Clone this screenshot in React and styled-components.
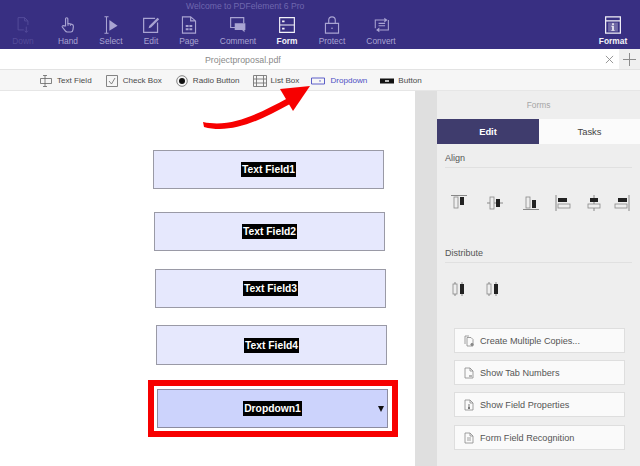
import React from 'react'
import styled, { createGlobalStyle } from 'styled-components'

const Global = createGlobalStyle`
  html, body { margin: 0; padding: 0; background: #fff; }
  body { font-family: "Liberation Sans", Arial, sans-serif; }
`

const Page = styled.div`
  position: relative;
  width: 640px;
  height: 466px;
  overflow: hidden;
`

const Header = styled.header`
  height: 49px;
  background: #382f82;
  display: flex;
  flex-direction: column;
`
const Title = styled.div`
  height: 12px;
  padding-left: 186px;
  padding-top: 1px;
  font-size: 8.6px;
  line-height: 11px;
  color: #6f67ae;
`
const Tools = styled.div`
  display: flex;
  flex: 1;
`
const Tool = styled.div`
  width: ${p => p.$w}px;
  margin-left: ${p => p.$push ? 'auto' : '0'};
  display: flex;
  flex-direction: column;
  align-items: center;
  color: ${p => p.$off ? '#544b9a' : p.$on ? '#f2f1f8' : '#a9a4d2'};
  font-size: 8.4px;
  font-weight: ${p => p.$on ? 700 : 400};
  svg { display: block; height: 18px; width: 18px; margin-top: 3px; }
  span { line-height: 10px; margin-top: 2px; }
`

const TabRow = styled.div`
  box-sizing: border-box;
  height: 21px;
  display: flex;
  background: #fff;
  border-bottom: 1px solid #e3e3e3;
`
const FileName = styled.div`
  flex: 1;
  padding-left: 205px;
  font-size: 8.8px;
  line-height: 22px;
  color: #8a8a8a;
`
const CloseBtn = styled.div`
  width: 20px;
  display: flex;
  align-items: center;
  justify-content: center;
  color: #8c8c8c;
  svg { width: 9px; height: 9px; }
`
const AddBtn = styled.div`
  width: 21px;
  background: #f0f0f0;
  display: flex;
  align-items: center;
  justify-content: center;
  color: #8c8c8c;
  svg { width: 13px; height: 13px; }
`

const FormBar = styled.div`
  box-sizing: border-box;
  height: 21px;
  background: #f6f6f6;
  border-bottom: 1px solid #e6e6e6;
  display: flex;
  align-items: center;
  padding: 1px 0 0 40px;
`
const FormItem = styled.div`
  display: flex;
  align-items: center;
  margin-right: ${p => p.$gap}px;
  font-size: 8.1px;
  color: ${p => p.$active ? '#4c4fc4' : '#4a4a4a'};
  svg { display: block; width: ${p => p.$icon || 12}px; height: 12px; margin-right: ${p => p.$iconGap || 5}px; }
`

const Main = styled.div`
  display: flex;
  height: 375px;
`
const Canvas = styled.div`
  width: 415px;
  background: #fff;
  padding-top: 59px;
  box-sizing: border-box;
`
const Gutter = styled.div`
  width: 22px;
  background: #dfdfdf;
`
const Field = styled.div`
  box-sizing: border-box;
  width: 231px;
  height: ${p => p.$h || 39}px;
  margin-left: ${p => p.$left}px;
  margin-top: ${p => p.$top}px;
  background: #e6e8fd;
  border: 1px solid #9a9aa6;
  display: flex;
  align-items: center;
  justify-content: center;
`
const Label = styled.span`
  background: #000;
  color: #fff;
  font-size: 10.3px;
  font-weight: 700;
  line-height: 15px;
  padding: 0 1px;
`
const RedFrame = styled.div`
  box-sizing: border-box;
  width: 250px;
  height: 57px;
  margin-left: 148px;
  margin-top: 15px;
  border: 6px solid #f70000;
  background: #fff;
  padding: 3px;
`
const DropField = styled.div`
  position: relative;
  box-sizing: border-box;
  height: 39px;
  width: 231px;
  background: #ccd3fc;
  border: 1px solid #8c8ca0;
  display: flex;
  align-items: center;
  justify-content: center;
`
const Caret = styled.i`
  position: absolute;
  right: 3px;
  top: 16px;
  width: 0;
  height: 0;
  border-left: 3.5px solid transparent;
  border-right: 3.5px solid transparent;
  border-top: 6px solid #111;
`

const Panel = styled.aside`
  width: 203px;
  background: #eeeeee;
  display: flex;
  flex-direction: column;
`
const PanelTitle = styled.div`
  height: 28px;
  text-align: center;
  font-size: 8.4px;
  line-height: 28px;
  color: #a6a6a6;
`
const Tabs = styled.div`
  display: flex;
  height: 25px;
`
const Tab = styled.div`
  width: ${p => p.$w}px;
  text-align: center;
  font-size: 9.4px;
  line-height: 25px;
  background: ${p => p.$on ? '#3f3c6d' : '#fbfbfb'};
  color: ${p => p.$on ? '#fff' : '#444'};
  font-weight: ${p => p.$on ? 700 : 400};
`
const Section = styled.div`
  margin: ${p => p.$top}px 8px 0 8px;
  padding-bottom: 3px;
  font-size: 9px;
  line-height: 12px;
  color: #555;
  border-bottom: 1px solid #e0e0e0;
`
const IconRow = styled.div`
  display: grid;
  grid-template-columns: ${p => p.$cols};
  margin-top: ${p => p.$top}px;
  padding-left: 13px;
  svg { display: block; width: 18px; height: 18px; }
`
const ActionList = styled.div`
  display: flex;
  flex-direction: column;
  margin: 30px 15px 0 17px;
  gap: 7px;
`
const Action = styled.div`
  height: 25px;
  box-sizing: border-box;
  background: #fafafa;
  border: 1px solid #dedede;
  display: flex;
  align-items: center;
  padding: 1px 0 0 8px;
  font-size: 9.15px;
  color: #555;
  svg { display: block; width: 12px; height: 12px; margin-right: 5px; color: #888; }
  &:last-child { margin-top: 1px; }
`
const ArrowLayer = styled.svg`
  position: absolute;
  left: 0;
  top: 0;
  width: 640px;
  height: 466px;
  pointer-events: none;
`

const line = { fill: 'none', stroke: 'currentColor', strokeWidth: 1.2 }

const DownIcon = () => (
  <svg viewBox="0 0 22 22" {...line}>
    <path d="M12 17H5V2h8l4 4v5M13 2v4h4" />
    <path d="M15 13v7M13 18l2 2 2-2" />
  </svg>
)
const HandIcon = () => (
  <svg viewBox="0 0 22 22" {...line} strokeWidth="1.4">
    <path d="M8 12V3.5a1.4 1.4 0 0 1 2.800 0V9l5 1.200c1.400.4 2 1.300 1.800 2.800l-.6 4c-.2 1.500-1 2.500-2.500 2.500H10c-1 0-1.700-.4-2.300-1.300L4 13.500c-.6-1 .8-2.300 1.800-1.500z" />
    <path d="M11 9v3M14 10v2" />
  </svg>
)
const SelectIcon = () => (
  <svg viewBox="0 0 22 22" {...line} strokeWidth="1.3">
    <path d="M3 1h5M3 21h5M5.500 1v20" />
    <path d="M9 5l10 7-10 6z" fill="currentColor" stroke="none" />
  </svg>
)
const EditIcon = () => (
  <svg viewBox="0 0 22 22" {...line} strokeWidth="1.500">
    <path d="M19 8v12H2V3h14" />
    <path d="M8 15l1-3L19 2l2 2-10 10z" fill="currentColor" stroke="none" />
  </svg>
)
const PageIcon = () => (
  <svg viewBox="0 0 22 22" {...line} strokeWidth="1.400">
    <path d="M3 1h10l6 5v15H3zM13 1v5h6" />
    <path d="M7 11h3.500v2.500H7zM11.500 11H15v2.500h-3.500zM7 15h3.500v2.500H7zM11.500 15H15v2.500h-3.500z" fill="currentColor" stroke="none" />
  </svg>
)
const CommentIcon = () => (
  <svg viewBox="0 0 22 22" {...line} strokeWidth="1.400">
    <path d="M9 14H2V2h16v7" />
    <path d="M7 9h13v8h-1v3l-3-3H7z" fill="currentColor" stroke="none" />
  </svg>
)
const FormIcon = () => (
  <svg viewBox="0 0 22 22" {...line} strokeWidth="1.400">
    <path d="M2 2h18v18H2zM2 11h18" />
    <path d="M5 5.500h3v2H5zM5 14.500h3v2H5z" fill="currentColor" stroke="none" />
  </svg>
)
const ProtectIcon = () => (
  <svg viewBox="0 0 22 22" {...line} strokeWidth="1.400">
    <path d="M3 9h16v12H3zM7 9V5a4 4 0 0 1 8 0v4" />
    <circle cx="11" cy="15" r="1" fill="currentColor" stroke="none" />
  </svg>
)
const ConvertIcon = () => (
  <svg viewBox="0 0 22 22" {...line} strokeWidth="1.300">
    <path d="M4 15V5h11M20 5v12H9" />
    <path d="M8 9h8M8 12h8" />
    <path d="M15 2l4 3-4 3zM9 14l-4 3 4 3z" fill="currentColor" stroke="none" />
  </svg>
)
const FormatIcon = () => (
  <svg viewBox="0 0 22 22" {...line} strokeWidth="1.500">
    <path d="M2 1h18v20H2zM2 6h18" />
    <path d="M5 8h12v11H5z" fill="currentColor" fillOpacity=".3" stroke="none" />
    <path d="M10 9h2v2h-2zM9 12h3v5h1v1H9v-1h1v-4H9z" fill="currentColor" stroke="none" />
  </svg>
)
const CrossIcon = () => (
  <svg viewBox="0 0 10 10" fill="none" stroke="currentColor"><path d="M1 1l8 8M9 1l-8 8" /></svg>
)
const PlusIcon = () => (
  <svg viewBox="0 0 13 13" fill="none" stroke="currentColor"><path d="M6.500 0v13M0 6.500h13" /></svg>
)

const TextFieldIcon = () => (
  <svg viewBox="0 0 12 12" fill="none" stroke="#666" strokeWidth=".8"><path d="M.5 3.500h11v5H.5zM3 .5h4M3 11.500h4M5 .5v11" /></svg>
)
const CheckIcon = () => (
  <svg viewBox="0 0 12 12" fill="none" stroke="#777" strokeWidth=".9"><path d="M.5.5h11v11H.5z" /><path d="M3 6l2.500 3L9 3" /></svg>
)
const RadioIcon = () => (
  <svg viewBox="0 0 12 12"><circle cx="6" cy="6" r="5.300" fill="none" stroke="#777" strokeWidth=".9" /><circle cx="6" cy="6" r="3" fill="#111" /></svg>
)
const ListIcon = () => (
  <svg viewBox="0 0 14 12" fill="none" stroke="#777" strokeWidth=".9"><path d="M.5.500h13v11H.5zM3.500.500v11M10.500.500v11M.5 4h13M.5 8h13" /></svg>
)
const DropIcon = () => (
  <svg viewBox="0 0 14 12" fill="none" stroke="#4c4fc4" strokeWidth=".9"><path d="M.5 3h13v6H.5z" /><path d="M8 5.500h2L9 7z" fill="#4c4fc4" stroke="none" /></svg>
)
const ButtonIcon = () => (
  <svg viewBox="0 0 14 12"><path d="M0 3.500h14v5H0z" fill="#111" /><path d="M5 5h4v2H5z" fill="#bbb" /></svg>
)

const Bar = ({ x, y, w, h, dark }) => (
  <rect x={x} y={y} width={w} height={h} fill={dark ? '#222' : '#eee'} stroke={dark ? 'none' : '#888'} strokeWidth=".8" />
)
const AlignTop = () => (
  <svg viewBox="0 0 18 18"><path d="M1 1.500h16" stroke="#888" /><Bar x={4} y={3} w={4} h={11} /><Bar x={10} y={3} w={4} h={8} dark /></svg>
)
const AlignMiddle = () => (
  <svg viewBox="0 0 18 18"><path d="M1 9h16" stroke="#888" /><Bar x={4} y={3} w={4} h={12} /><Bar x={10} y={5} w={4} h={8} dark /></svg>
)
const AlignBottom = () => (
  <svg viewBox="0 0 18 18"><path d="M1 15.500h16" stroke="#888" /><Bar x={4} y={3} w={4} h={11} /><Bar x={10} y={6} w={4} h={8} dark /></svg>
)
const AlignLeft = () => (
  <svg viewBox="0 0 18 18"><path d="M2 1v16" stroke="#888" /><Bar x={4} y={10} w={12} h={4} /><Bar x={4} y={4} w={9} h={4} dark /></svg>
)
const AlignCenter = () => (
  <svg viewBox="0 0 18 18"><path d="M9 1v16" stroke="#888" /><Bar x={3} y={10} w={12} h={4} /><Bar x={5} y={4} w={8} h={4} dark /></svg>
)
const AlignRight = () => (
  <svg viewBox="0 0 18 18"><path d="M16 1v16" stroke="#888" /><Bar x={2} y={10} w={12} h={4} /><Bar x={5} y={4} w={9} h={4} dark /></svg>
)
const DistA = () => (
  <svg viewBox="0 0 18 18"><path d="M5 2v14M12 2v14" stroke="#888" /><Bar x={3} y={4} w={4} h={10} /><Bar x={10} y={4} w={4} h={10} dark /></svg>
)

const CopiesIcon = () => (
  <svg viewBox="0 0 12 12" fill="none" stroke="currentColor" strokeWidth=".8"><path d="M2 9V1h4M4 11V2.500h4l2 2V11z" /><circle cx="9" cy="9.500" r="1.200" fill="currentColor" /></svg>
)
const TabNumIcon = () => (
  <svg viewBox="0 0 12 12" fill="none" stroke="currentColor" strokeWidth=".8"><path d="M2 11V1h5l3 3v7zM7 1v3h3" /><path d="M6 9h3" strokeWidth="1.200" /></svg>
)
const PropsIcon = () => (
  <svg viewBox="0 0 12 12" fill="none" stroke="currentColor" strokeWidth=".8"><path d="M2 11V1h5l3 3v7zM7 1v3h3" /><path d="M6 5.500v1M6 7.500V10" stroke="#222" strokeWidth="1.200" /></svg>
)
const RecognizeIcon = () => (
  <svg viewBox="0 0 12 12" fill="none" stroke="currentColor" strokeWidth=".8"><path d="M2 11V1h5l3 3v7zM7 1v3h3M4 6h4M4 8h4" /></svg>
)

const tools = [
  { name: 'Down', w: 46, icon: <DownIcon />, off: true },
  { name: 'Hand', w: 44, icon: <HandIcon /> },
  { name: 'Select', w: 42, icon: <SelectIcon /> },
  { name: 'Edit', w: 38, icon: <EditIcon /> },
  { name: 'Page', w: 38, icon: <PageIcon /> },
  { name: 'Comment', w: 60, icon: <CommentIcon /> },
  { name: 'Form', w: 38, icon: <FormIcon />, on: true },
  { name: 'Protect', w: 52, icon: <ProtectIcon /> },
  { name: 'Convert', w: 46, icon: <ConvertIcon /> },
]

const formItems = [
  { name: 'Text Field', icon: <TextFieldIcon />, gap: 14 },
  { name: 'Check Box', icon: <CheckIcon />, gap: 14 },
  { name: 'Radio Button', icon: <RadioIcon />, gap: 13 },
  { name: 'List Box', icon: <ListIcon />, gap: 12, size: 14, iconGap: 4 },
  { name: 'Dropdown', icon: <DropIcon />, gap: 13, size: 14, iconGap: 5, active: true },
  { name: 'Button', icon: <ButtonIcon />, gap: 0, size: 14, iconGap: 4 },
]

const fields = [
  { name: 'Text Field1', left: 153, top: 0 },
  { name: 'Text Field2', left: 154, top: 23 },
  { name: 'Text Field3', left: 155, top: 18 },
  { name: 'Text Field4', left: 156, top: 17, h: 40 },
]

const actions = [
  { name: 'Create Multiple Copies...', icon: <CopiesIcon /> },
  { name: 'Show Tab Numbers', icon: <TabNumIcon /> },
  { name: 'Show Field Properties', icon: <PropsIcon /> },
  { name: 'Form Field Recognition', icon: <RecognizeIcon /> },
]

export default function App() {
  return (
    <Page>
      <Global />
      <Header>
        <Title>Welcome to PDFelement 6 Pro</Title>
        <Tools>
          {tools.map(t => (
            <Tool key={t.name} $w={t.w} $off={t.off} $on={t.on}>
              {t.icon}
              <span>{t.name}</span>
            </Tool>
          ))}
          <Tool $w={54} $on $push>
            <FormatIcon />
            <span>Format</span>
          </Tool>
        </Tools>
      </Header>

      <TabRow>
        <FileName>Projectproposal.pdf</FileName>
        <CloseBtn><CrossIcon /></CloseBtn>
        <AddBtn><PlusIcon /></AddBtn>
      </TabRow>

      <FormBar>
        {formItems.map(f => (
          <FormItem key={f.name} $gap={f.gap} $icon={f.size} $iconGap={f.iconGap} $active={f.active}>
            {f.icon}
            {f.name}
          </FormItem>
        ))}
      </FormBar>

      <Main>
        <Canvas>
          {fields.map(f => (
            <Field key={f.name} $left={f.left} $top={f.top} $h={f.h}>
              <Label>{f.name}</Label>
            </Field>
          ))}
          <RedFrame>
            <DropField>
              <Label>Dropdown1</Label>
              <Caret />
            </DropField>
          </RedFrame>
        </Canvas>
        <Gutter />
        <Panel>
          <PanelTitle>Forms</PanelTitle>
          <Tabs>
            <Tab $w={102} $on>Edit</Tab>
            <Tab $w={101}>Tasks</Tab>
          </Tabs>
          <Section $top={8}>Align</Section>
          <IconRow $top={26} $cols="36px 36px 32px 31px 28px 18px">
            <AlignTop />
            <AlignMiddle />
            <AlignBottom />
            <AlignLeft />
            <AlignCenter />
            <AlignRight />
          </IconRow>
          <Section $top={35}>Distribute</Section>
          <IconRow $top={17} $cols="34px 18px">
            <DistA />
            <DistA />
          </IconRow>
          <ActionList>
            {actions.map(a => (
              <Action key={a.name}>
                {a.icon}
                {a.name}
              </Action>
            ))}
          </ActionList>
        </Panel>
      </Main>

      <ArrowLayer viewBox="0 0 640 466">
        <path d="M203 122 C232 128 258 114 288 98 L290 104 C258 122 230 134 204 127 Z" fill="#f70000" />
        <path d="M310 86 L280 89 L293 111 Z" fill="#f70000" />
      </ArrowLayer>
    </Page>
  )
}
